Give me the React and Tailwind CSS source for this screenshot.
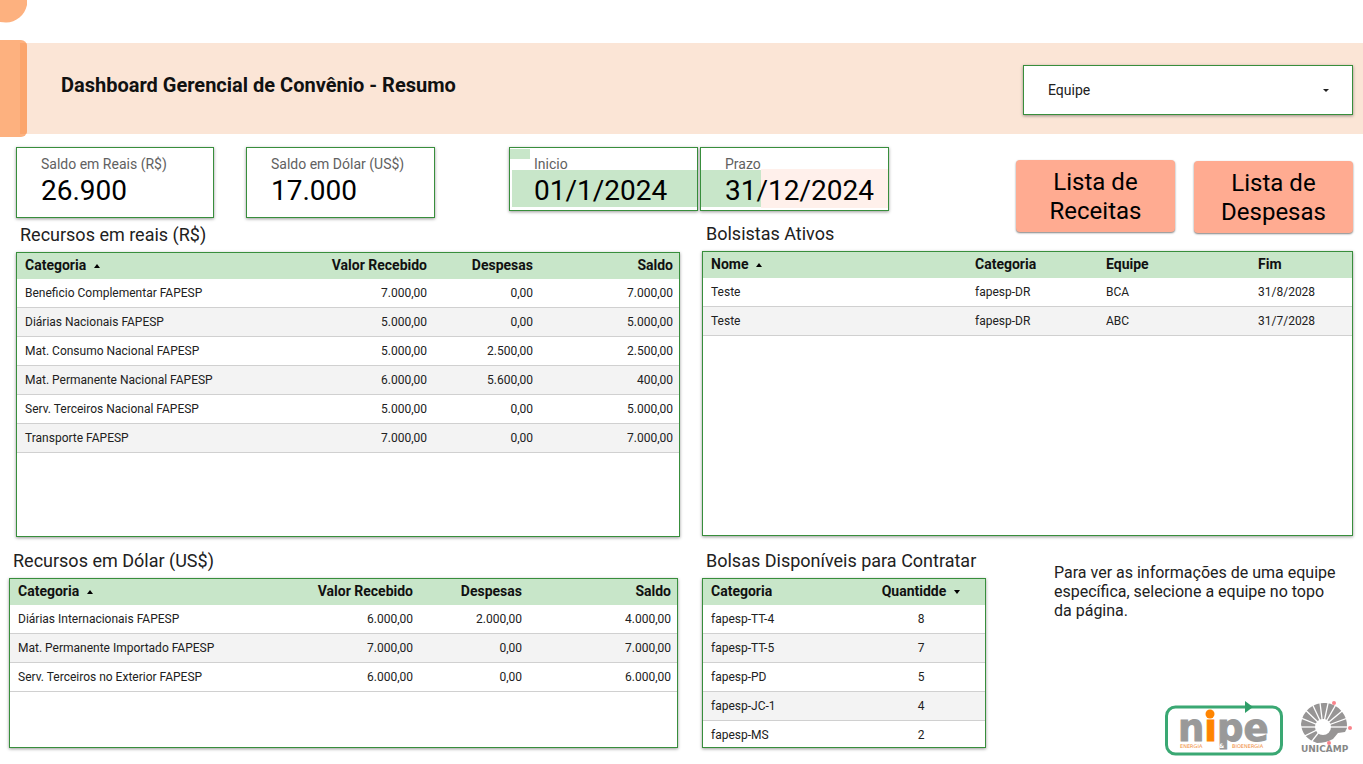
import React from 'react'

const PANEL = 'border border-[#388e3c] bg-white shadow-[0_1px_3px_rgba(0,0,0,0.4)]'

const moneyHeaders = ['Categoria', 'Valor Recebido', 'Despesas', 'Saldo']

const reais = [
    ['Beneficio Complementar FAPESP', '7.000,00', '0,00', '7.000,00'],
    ['Diárias Nacionais FAPESP', '5.000,00', '0,00', '5.000,00'],
    ['Mat. Consumo Nacional FAPESP', '5.000,00', '2.500,00', '2.500,00'],
    ['Mat. Permanente Nacional FAPESP', '6.000,00', '5.600,00', '400,00'],
    ['Serv. Terceiros Nacional FAPESP', '5.000,00', '0,00', '5.000,00'],
    ['Transporte FAPESP', '7.000,00', '0,00', '7.000,00'],
]

const dolares = [
    ['Diárias Internacionais FAPESP', '6.000,00', '2.000,00', '4.000,00'],
    ['Mat. Permanente Importado FAPESP', '7.000,00', '0,00', '7.000,00'],
    ['Serv. Terceiros no Exterior FAPESP', '6.000,00', '0,00', '6.000,00'],
]

const bolsistas = [
    ['Teste', 'fapesp-DR', 'BCA', '31/8/2028'],
    ['Teste', 'fapesp-DR', 'ABC', '31/7/2028'],
]

const bolsas = [
    ['fapesp-TT-4', '8'],
    ['fapesp-TT-5', '7'],
    ['fapesp-PD', '5'],
    ['fapesp-JC-1', '4'],
    ['fapesp-MS', '2'],
]

function SortArrow({ dir }) {
    return (
        <svg className="ml-2 inline-block" width="6" height="4" viewBox="0 0 6 4" aria-hidden="true">
            <path d={dir === 'up' ? 'M0 4L3 0L6 4Z' : 'M0 0L3 4L6 0Z'} fill="#000" />
        </svg>
    )
}

/**
 * Table inside a bordered panel.
 *
 * @param {string[]} cols - Width class of each column
 * @param {string[]} align - Text alignment class of each column
 * @param {{col: number, dir: string}} sort - Which header carries the arrow
 */
function DataTable({ label, headers, rows, cols, align, sort, className }) {
    return (
        <div className={`${PANEL} overflow-hidden ${className}`}>
            <table aria-label={label} className="w-full table-fixed border-separate border-spacing-0">
                <colgroup>
                    {cols.map((c, i) => <col key={i} className={c} />)}
                </colgroup>
                <thead>
                    <tr className="h-[26px] bg-[#c8e6c9]">
                        {headers.map((h, i) => (
                            <th key={h} className={`pt-0 pb-0.5 pl-2 pr-1.5 text-sm leading-5 font-bold whitespace-nowrap text-[#111] ${align[i]}`}>
                                {h}
                                {sort.col === i && <SortArrow dir={sort.dir} />}
                            </th>
                        ))}
                    </tr>
                </thead>
                <tbody>
                    {rows.map((row, r) => (
                        <tr key={r} className="h-[29px] even:bg-[#f3f3f3]">
                            {row.map((cell, i) => (
                                <td key={i} className={`border-b border-[#d0d0d0] py-0 pl-2 pr-1.5 text-xs text-[#212121] ${align[i]}`}>{cell}</td>
                            ))}
                        </tr>
                    ))}
                </tbody>
            </table>
        </div>
    )
}

function Scorecard({ label, value, className, children }) {
    return (
        <div className={`${PANEL} relative pl-6 pt-1.5 ${className}`}>
            {children}
            <div className="relative text-sm leading-5 text-[#616161]">{label}</div>
            <div className="relative text-[28px] leading-[34px] text-black">{value}</div>
        </div>
    )
}

function SectionTitle({ children, className }) {
    return <h2 className={`text-lg text-[#212121] ${className}`}>{children}</h2>
}

function ListButton({ children, className }) {
    return (
        <button
            type="button"
            className={`h-[72px] w-[159px] rounded-sm bg-[#ffab91] px-6 pt-0.5 text-2xl leading-[29px] text-black shadow-[0_1px_2px_rgba(0,0,0,0.5)] ${className}`}
        >
            {children}
        </button>
    )
}

function NipeLogo() {
    return (
        <svg width="120" height="56" viewBox="0 0 120 56" role="img" aria-label="nipe">
            <rect x="2.5" y="7" width="115" height="47" rx="9" fill="#fff" stroke="#3aa873" strokeWidth="3" />
            <path d="M81 1L89 7L81 13Z" fill="#2f9e68" />
            <g fontFamily="DejaVu Sans, sans-serif" fontWeight="700">
                <text x="14" y="41" fontSize="37" fill="#999" stroke="#999">
                    n<tspan fill="#ff8400" stroke="#ff8400">ı</tspan>pe
                </text>
                <circle cx="46" cy="14" r="4.5" fill="#ff8400" />
                <g fontSize="5" fontWeight="400" fill="#f08c3c">
                    <text x="16" y="48">ENERGIA</text>
                    <text x="68" y="48">BIOENERGIA</text>
                </g>
                <text x="55" y="48" fontSize="6" fill="#fff">&amp;</text>
            </g>
        </svg>
    )
}

function UnicampLogo() {
    // spokes leave the inner hole and cut the grey disc into petals
    const spokes = [-180, -158, -136, -115, -97, -78, -60, -40, -20, 0, 128, 154]
    return (
        <svg width="54" height="56" viewBox="0 0 54 56" role="img" aria-label="UNICAMP">
            <path d="M48 28A23 23 0 1 0 2 24Q3 38 18 43Q27 43 34 39L39 33L46 32Z" fill="#979595" />
            <g stroke="#fff" strokeWidth="1.3">
                {spokes.map((a) => (
                    <line
                        key={a}
                        x1="24"
                        y1="27"
                        x2={24 + 32 * Math.cos((a * Math.PI) / 180)}
                        y2={27 + 32 * Math.sin((a * Math.PI) / 180)}
                    />
                ))}
            </g>
            <circle cx="24" cy="27" r="8" fill="#fff" />
            <g fill="#f9838b">
                <circle cx="35" cy="3" r="2" />
                <circle cx="51" cy="28" r="2" />
                <circle cx="30" cy="43" r="2" />
            </g>
            <text x="2" y="52" fontFamily="DejaVu Sans, sans-serif" fontWeight="700" fontSize="9" fill="#888">UNICAMP</text>
        </svg>
    )
}

function Header() {
    return (
        <header className="relative pt-[43px]">
            <svg className="absolute left-0 top-0" width="27" height="23" viewBox="0 0 27 23" aria-hidden="true">
                <path d="M0 0H27V5C25 15 16 22.5 6 22.5C4 22.5 2 22.3 0 22Z" fill="#fdb17f" />
            </svg>
            <div className="flex h-[91px] items-start justify-between bg-[#fbe5d6] pl-[61px] pr-2.5">
                <h1 className="mt-7 text-xl leading-7 font-bold text-[#111]">
                    Dashboard Gerencial de Convênio - Resumo
                </h1>
                <div className="relative mt-[22px] h-[50px] w-[330px]">
                    <select
                        aria-label="Equipe"
                        className={`${PANEL} h-full w-full appearance-none rounded-none px-6 text-sm text-[#212121]`}
                    >
                        <option>Equipe</option>
                    </select>
                    <svg className="pointer-events-none absolute right-6 top-6" width="6" height="3" viewBox="0 0 6 3" aria-hidden="true">
                        <path d="M0 0H6L3 3Z" fill="#212121" />
                    </svg>
                </div>
            </div>
            <div className="absolute left-0 top-10 h-[97px] w-[27px] overflow-hidden rounded-r-md bg-[#fdb17f]">
                <div className="ml-auto mt-[3px] h-[91px] w-[7px] bg-[#fba56c]"></div>
            </div>
        </header>
    )
}

function App() {
    return (
        <div className="min-h-screen overflow-hidden bg-white font-[Roboto,sans-serif]">
            <Header />

            {/* Scorecards and links to the detail lists */}
            <div className="mt-[13px] flex items-start pl-4 pr-2.5">
                <Scorecard label="Saldo em Reais (R$)" value="26.900" className="h-[71px] w-[198px]" />
                <Scorecard label="Saldo em Dólar (US$)" value="17.000" className="ml-8 h-[71px] w-[189px]" />
                <Scorecard label="Inicio" value="01/1/2024" className="ml-[74px] h-16 w-[189px]">
                    <div className="absolute left-0 top-px h-2.5 w-5 bg-[#c8e6c9]"></div>
                    <div className="absolute left-0.5 right-0 top-[22px] h-[37px] bg-[#c8e6c9]"></div>
                </Scorecard>
                <Scorecard label="Prazo" value="31/12/2024" className="ml-0.5 h-16 w-[189px]">
                    <div className="absolute left-0 top-[22px] h-[37px] w-[60px] bg-[#c8e6c9]"></div>
                    <div className="absolute left-[60px] right-0 top-[21px] h-[39px] bg-[#fff0eb]"></div>
                </Scorecard>
                <div className="-mb-4 ml-auto mt-[13px] flex gap-[19px]">
                    <ListButton>Lista de Receitas</ListButton>
                    <ListButton className="mt-px">Lista de Despesas</ListButton>
                </div>
            </div>

            <main>
                <div className="grid grid-cols-[664fr_651fr] gap-[22px] pl-4 pr-2.5">
                    <section>
                        <SectionTitle className="pl-1 leading-[34px]">Recursos em reais (R$)</SectionTitle>
                        <DataTable
                            label="Recursos em reais (R$)"
                            headers={moneyHeaders}
                            rows={reais}
                            cols={['w-auto', 'w-[130px]', 'w-[106px]', 'w-[140px]']}
                            align={['text-left', 'text-right', 'text-right', 'text-right']}
                            sort={{ col: 0, dir: 'up' }}
                            className="h-[285px]"
                        />
                    </section>
                    <section>
                        <SectionTitle className="mb-px pl-1 leading-8">Bolsistas Ativos</SectionTitle>
                        <DataTable
                            label="Bolsistas Ativos"
                            headers={['Nome', 'Categoria', 'Equipe', 'Fim']}
                            rows={bolsistas}
                            cols={['w-auto', 'w-[131px]', 'w-[152px]', 'w-[102px]']}
                            align={['text-left', 'text-left', 'text-left', 'text-left']}
                            sort={{ col: 0, dir: 'up' }}
                            className="h-[285px]"
                        />
                    </section>
                </div>

                <div className="mt-2 grid grid-cols-[669fr_651fr] gap-6 pl-[9px] pr-2.5">
                    <section>
                        <SectionTitle className="mb-px pl-1 leading-8">Recursos em Dólar (US$)</SectionTitle>
                        <DataTable
                            label="Recursos em Dólar (US$)"
                            headers={moneyHeaders}
                            rows={dolares}
                            cols={['w-auto', 'w-[130px]', 'w-[109px]', 'w-[149px]']}
                            align={['text-left', 'text-right', 'text-right', 'text-right']}
                            sort={{ col: 0, dir: 'up' }}
                            className="h-[170px]"
                        />
                    </section>
                    <div className="flex justify-between">
                        <section className="w-[284px]">
                            <SectionTitle className="mb-px pl-1 leading-8">Bolsas Disponíveis para Contratar</SectionTitle>
                            <DataTable
                                label="Bolsas Disponíveis para Contratar"
                                headers={['Categoria', 'Quantidde']}
                                rows={bolsas}
                                cols={['w-auto', 'w-[130px]']}
                                align={['text-left', 'text-center']}
                                sort={{ col: 1, dir: 'down' }}
                                className="h-[170px]"
                            />
                        </section>
                        <div className="-mb-2 flex w-[299px] flex-col justify-between">
                            <p className="mt-[18px] pr-3 text-base leading-[19px] text-[#212121]">
                                Para ver as informações de uma equipe específica, selecione a equipe no topo da página.
                            </p>
                            <div className="flex justify-end gap-[15px]">
                                <NipeLogo />
                                <UnicampLogo />
                            </div>
                        </div>
                    </div>
                </div>
            </main>
        </div>
    )
}

export default App
